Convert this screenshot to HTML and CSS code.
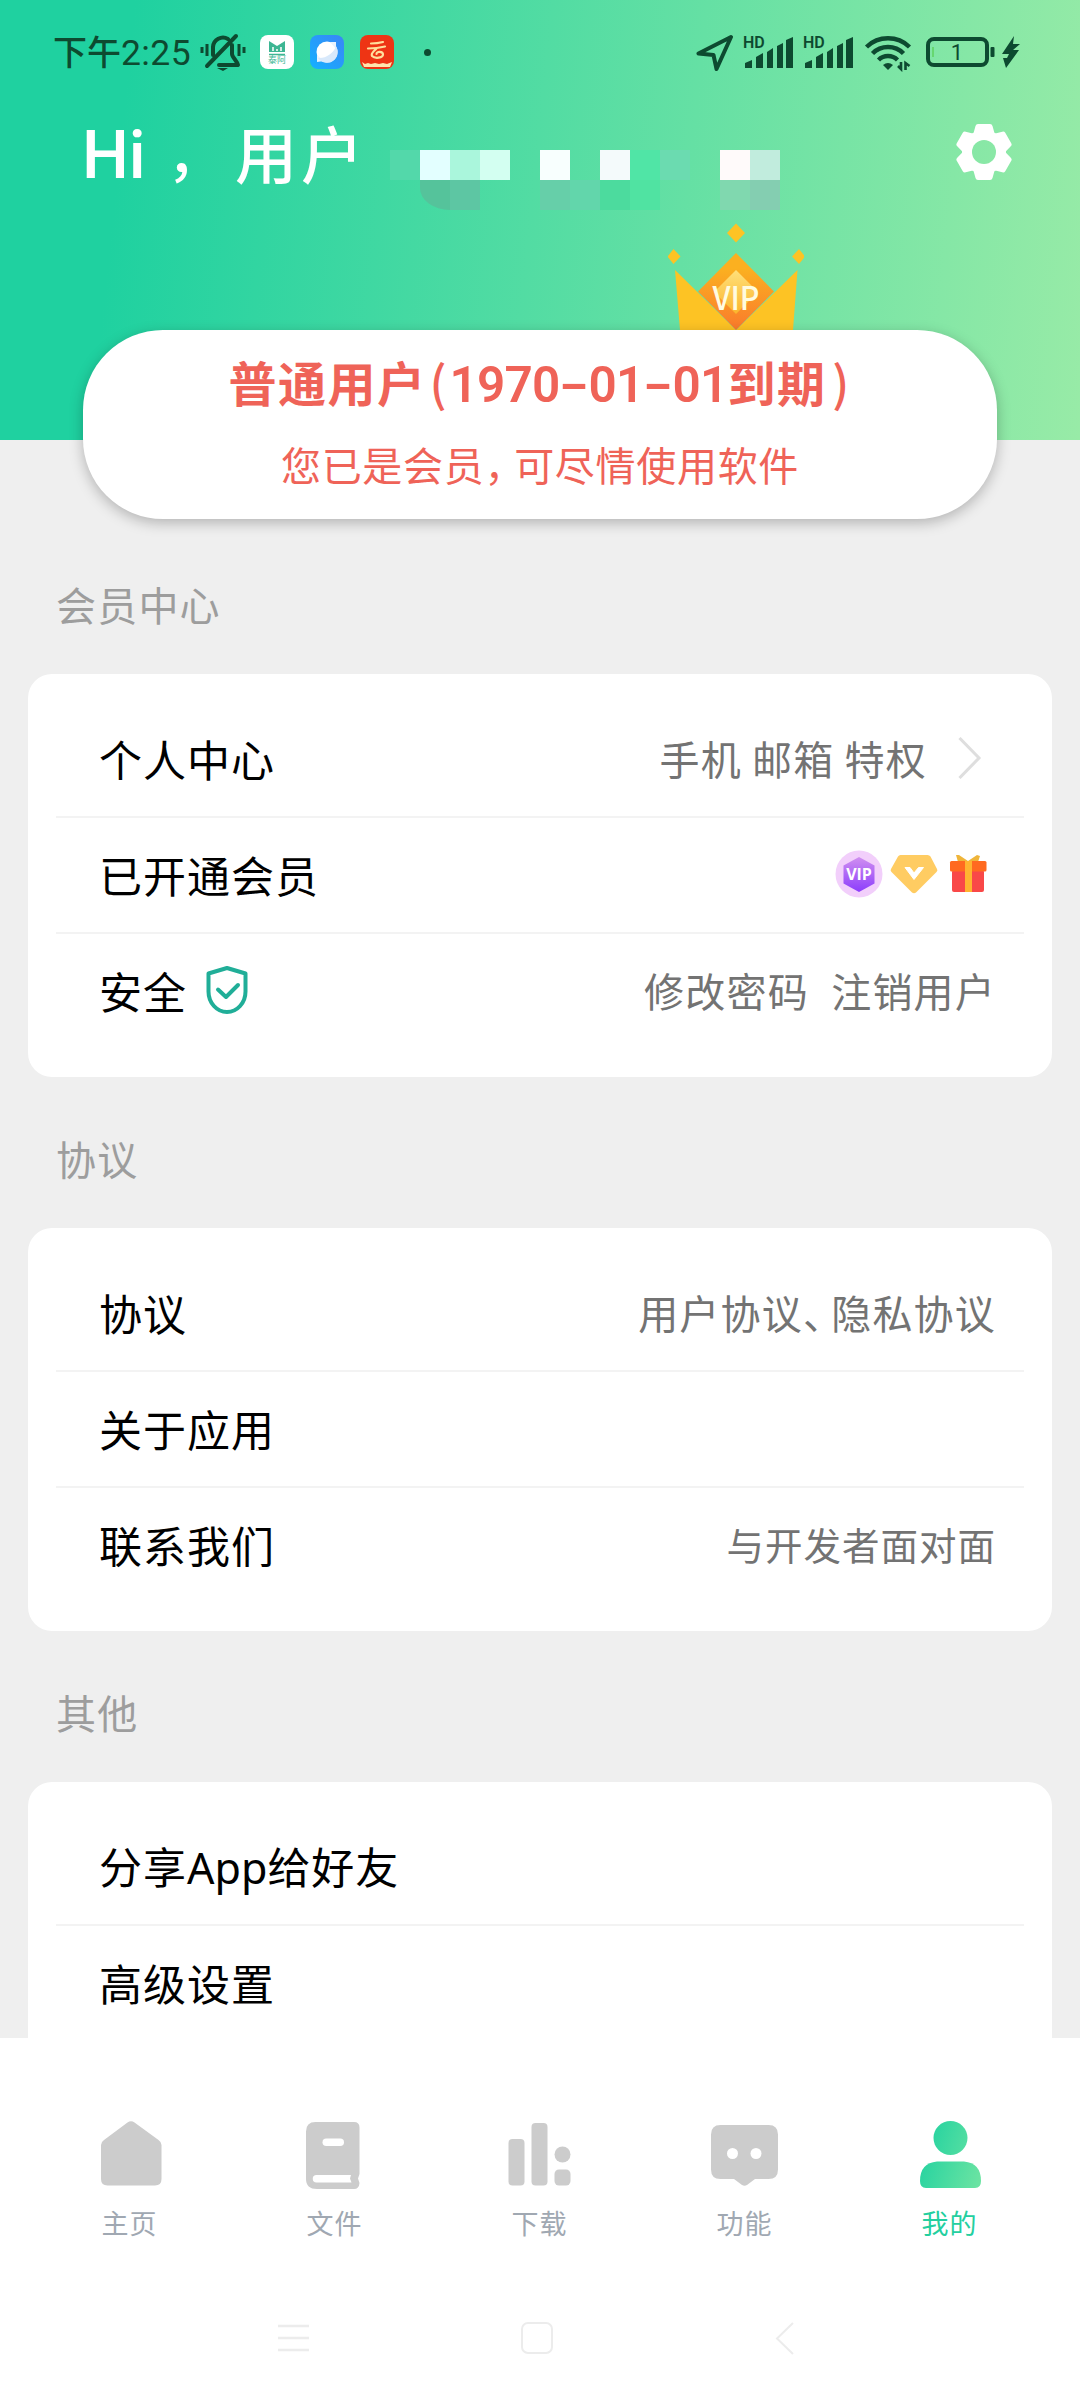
FILE: index.html
```html
<!DOCTYPE html>
<html lang="zh-CN">
<head>
<meta charset="utf-8">
<title>我的</title>
<link rel="stylesheet" href="styles.css">
</head>
<body>
<div class="screen">
  <main class="content">
    <header class="hero">
      <div class="status">
        <span class="clock">下午<span class="clock-num">2:25</span></span>
        <svg class="bell" width="46" height="40" viewBox="0 0 46 40" fill="none" stroke="currentColor" stroke-width="4" stroke-linecap="round" stroke-linejoin="round">
          <path d="M13 23V15a10 10 0 0 1 15-8M7 34L36 4M32 13v9c0 3 5 7 6 11H19"/>
          <path d="M2 15v6M7 12v12M39 12v12M44 15v6" stroke-width="3" stroke-linecap="butt"/>
          <path d="M17 36h11l-5 3z" fill="currentColor" stroke="none"/>
        </svg>
        <svg class="app" width="34" height="34" viewBox="0 0 34 34">
          <rect width="34" height="34" rx="8" fill="#fff"/>
          <path d="M9 6l8 5 8-5v11H9z" fill="#3db693"/><path d="M13 12v4M17 14v2M21 12v4" stroke="#fff" stroke-width="1.5"/><path d="M9 19.5h16" stroke="#3db693" stroke-width="1.5"/>
          <text x="17" y="28" text-anchor="middle" class="app-word">泰阿</text>
        </svg>
        <svg class="app" width="34" height="34" viewBox="0 0 34 34">
          <defs><linearGradient id="blue" x1="0" y1="1" x2="1" y2="0"><stop stop-color="#14b1ff"/><stop offset="1" stop-color="#3a86f6"/></linearGradient></defs>
          <rect width="34" height="34" rx="8" fill="url(#blue)"/>
          <circle cx="17" cy="17" r="10.5" fill="#fff"/><path d="M7 20l0 7 7-1M20 7l6 0 0 7" fill="#e9f3fd"/>
          <path d="M8 23C15 24 24 18 26 11a10.500 10.500 0 0 1-18 12z" fill="#d8e9fb"/>
        </svg>
        <svg class="app" width="34" height="34" viewBox="0 0 34 34">
          <rect width="34" height="34" rx="8" fill="#ee3414"/>
          <path d="M11 8.500q6 0 12-1.500M8 13.500q9 0 17-2M16.500 13.500c-3 3-6 5-4.500 7.500 3 3 11 2 11-1.500 0-3.500-6.500-3.500-6.500-.5" fill="none" stroke="#ffdf9d" stroke-width="2.200" stroke-linecap="round"/>
          <path d="M2 27l3 2 3-1 3 1 4-1 4 1 4-1 4 1 5-2-2 5H4z" fill="#ffe6ad"/>
        </svg>
        <span class="dot"></span>
        <svg class="locate" width="38" height="38" viewBox="0 0 38 38" fill="none" stroke="currentColor" stroke-width="4" stroke-linejoin="round"><path d="M35 3L2.500 19.500l15 1.500 3 14z"/></svg>
        <svg class="signal" width="52" height="36" viewBox="0 0 52 36" fill="currentColor"><text x="0" y="13.500" class="hd">HD</text><path d="M2 34v-5l7-3v8zM13 34V23l7-4v15zM24 34V18l6-4v20zM34 34V12l6-3v25zM43 34V6l7-3v31z"/></svg>
        <svg class="signal" width="52" height="36" viewBox="0 0 52 36" fill="currentColor"><text x="0" y="13.500" class="hd">HD</text><path d="M2 34v-5l7-3v8zM13 34V23l7-4v15zM24 34V18l6-4v20zM34 34V12l6-3v25zM43 34V6l7-3v31z"/></svg>
        <svg class="wifi" width="48" height="38" viewBox="0 0 48 38" fill="none" stroke="currentColor" stroke-width="4.500">
          <path d="M2.500 13a31 31 0 0 1 43 0M8.500 19.500a22 22 0 0 1 31 0M14.500 26a13.500 13.500 0 0 1 19 0"/>
          <path d="M24 36l-5-5a8 8 0 0 1 10 0z" fill="currentColor" stroke="none"/>
          <path d="M37 28v7l-3-3M41.500 36v-7l4 3" stroke-width="2.600"/>
        </svg>
        <svg class="battery" width="70" height="34" viewBox="0 0 70 34" fill="none" stroke="currentColor"><rect x="2" y="4" width="59" height="26" rx="6" stroke-width="4"/><rect x="64.500" y="12" width="4" height="10" rx="1" fill="currentColor" stroke="none"/><path d="M7 12v10" stroke="#4cc83b" stroke-width="1"/><text x="31" y="25" text-anchor="middle" class="level">1</text></svg>
        <svg class="bolt" width="18" height="32" viewBox="0 0 18 32" fill="currentColor"><path d="M12 0L0 18h7L5 22H1L4 32 17 14h-6l7-6h-7z"/></svg>
      </div>
      <div class="greeting">
        <div class="hello"><span class="hi">Hi</span><span class="comma">，</span><span class="user">用户</span></div>
        <div class="mosaic">
          <i class="m1"></i><i class="m2"></i><i class="m3"></i><i class="m4"></i><i></i><i class="m5"></i><i></i><i class="m6"></i><i class="m7"></i><i class="m8"></i><i></i><i class="m9"></i><i class="m10"></i>
          <i></i><i class="n1"></i><i class="n2"></i><i></i><i></i><i class="n3"></i><i class="n4"></i><i class="n5"></i><i class="n6"></i><i></i><i></i><i class="n7"></i><i class="n8"></i>
        </div>
        <svg class="gear" width="56" height="56" viewBox="-28 -28 56 56">
          <defs><mask id="hole"><rect x="-28" y="-28" width="56" height="56" fill="#fff"/><circle r="12" fill="#000"/></mask>
          <path id="tooth" d="M-11 -17L-8.500 -26Q-8 -28 -6 -28H6Q8 -28 8.500 -26L11 -17V0H-11z"/></defs>
          <g fill="#fff" mask="url(#hole)"><circle r="22"/><use href="#tooth"/><use href="#tooth" transform="rotate(60)"/><use href="#tooth" transform="rotate(120)"/><use href="#tooth" transform="rotate(180)"/><use href="#tooth" transform="rotate(240)"/><use href="#tooth" transform="rotate(300)"/></g>
        </svg>
      </div>
      <svg class="crown" width="136" height="108" viewBox="0 0 136 108">
        <defs>
          <linearGradient id="gem" x1="0" y1="0" x2="0" y2="1"><stop offset=".2" stop-color="#fbb020"/><stop offset="1" stop-color="#fa7a2c"/></linearGradient>
          <linearGradient id="core" x1="0" y1="0" x2="0" y2="1"><stop stop-color="#ffe07a"/><stop offset="1" stop-color="#fbb52c"/></linearGradient>
        </defs>
        <path d="M7 48L68 108 129.500 48 125 108H12z" fill="#fdc324"/>
        <path d="M68 31l38 38.500-38 38.500-38-38.500z" fill="url(#gem)"/>
        <path d="M68 48l22 22-22 22-22-22z" fill="url(#core)"/>
        <g fill="#fdc324"><path d="M68 1.500l9 9.500-9 9.500-9-9.500z"/><path d="M5.500 27l7 7.500-7 7.500-6-7.500zM131 27l6 7.500-6 7.500-7-7.500z"/></g>
        <text x="68" y="88" text-anchor="middle" class="crown-word" textLength="47" lengthAdjust="spacingAndGlyphs">VIP</text>
      </svg>
    </header>

    <section class="member">
      <h1 class="member-title">普通用户<span class="paren">(</span><span class="date">1970<span class="dash">-</span>01<span class="dash">-</span>01</span>到期<span class="paren close">)</span></h1>
      <p class="member-sub">您已是会员<span class="tight">，</span>可尽情使用软件</p>
    </section>

    <h2 class="label">会员中心</h2>
    <section class="card">
      <div class="row"><span class="name">个人中心</span><span class="value">手机 邮箱 特权</span>
        <svg class="arrow" width="24" height="42" viewBox="0 0 24 42" fill="none" stroke="#dedede" stroke-width="3"><path d="M1.500 1L21 21 1.500 41"/></svg></div>
      <div class="row"><span class="name">已开通会员</span>
        <span class="badges">
          <svg width="48" height="48" viewBox="0 0 48 48"><defs><linearGradient id="vip" x1="0" y1="0" x2="0" y2="1"><stop stop-color="#d08ff0"/><stop offset="1" stop-color="#8c3dfc"/></linearGradient></defs><circle cx="24" cy="24" r="23.500" fill="#f2cffb"/><path d="M24 7l15.500 8.500v18L24 42 8.500 33.500v-18z" fill="url(#vip)"/><text x="24" y="29.500" text-anchor="middle" class="vip-word">VIP</text></svg>
          <svg width="48" height="48" viewBox="0 0 48 48"><path d="M10.500 5h27q2 0 3 1.500L47 19q1 1.500-.5 3L26 42.500q-2 1.500-4 0L1.500 22q-1.500-1.500-.5-3L8 6.500Q8.800 5 10.500 5z" fill="#ffcc62"/><path d="M15 17.500h5l4 5.500 4.500-5.500h5L24 29.500z" fill="#fff" stroke="#fff" stroke-width="1"/></svg>
          <svg class="gift" width="38" height="48" viewBox="0 0 38 48"><path d="M7 5l3 0 9 6 9-6 3 1-2 6H9z" fill="#efb53a"/><rect x="3" y="20" width="32" height="22" rx="2" fill="#f94848"/><rect x="1" y="11" width="36.500" height="10.500" rx="1.500" fill="#ff6a20"/><rect x="16" y="11" width="7" height="31" fill="#ffb430"/></svg>
        </span></div>
      <div class="row"><span class="name">安全</span>
        <svg class="shield" width="44" height="50" viewBox="0 0 44 50" fill="none" stroke="#20ae98" stroke-width="4" stroke-linecap="round" stroke-linejoin="round"><path d="M22 3L40.500 8.500V26.500a18.500 20.500 0 0 1-37 0V8.500z"/><path d="M13 24.500l8 7.500 12-12"/></svg>
        <span class="value wide">修改密码  注销用户</span></div>
    </section>

    <h2 class="label">协议</h2>
    <section class="card">
      <div class="row"><span class="name">协议</span><span class="value">用户协议<span class="pause">、</span>隐私协议</span></div>
      <div class="row"><span class="name">关于应用</span></div>
      <div class="row"><span class="name">联系我们</span><span class="value small">与开发者面对面</span></div>
    </section>

    <h2 class="label">其他</h2>
    <section class="card">
      <div class="row"><span class="name">分享<span class="latin">App</span>给好友</span></div>
      <div class="row last"><span class="name">高级设置</span></div>
    </section>
  </main>

  <nav class="tabs">
    <div class="tab"><svg width="82" height="72" viewBox="0 0 82 72" fill="#ccc"><path d="M38.500 4.500q3.500-2.500 7 0L69.500 22q3 2 3 5v34q0 6.500-6.500 6.500H18.500Q12 67.500 12 61V27q0-3 3-5z"/></svg><span>主页</span></div>
    <div class="tab"><svg width="82" height="72" viewBox="0 0 82 72" fill="#ccc"><path d="M21.500 4H60q5.500 0 5.500 5.500V56l-1.500 4.500 1.500 4.500Q65 71 60 71H23Q12 71 12 61V13.500Q12 4 21.500 4z"/><rect x="28.500" y="20.500" width="21.500" height="7.500" rx="3.750" fill="#fff"/><path d="M22.500 57H57l-1 3.500 1.500 4H22.500a3.750 3.750 0 0 1 0-7.500z" fill="#fff"/></svg><span>文件</span></div>
    <div class="tab"><svg width="82" height="72" viewBox="0 0 82 72" fill="#ccc"><rect x="9.500" y="21" width="16" height="46.500" rx="4"/><rect x="32.500" y="5" width="16" height="62.500" rx="4"/><circle cx="63.500" cy="36.500" r="8"/><rect x="55.500" y="51.500" width="16" height="16" rx="4.500"/></svg><span>下载</span></div>
    <div class="tab"><svg width="82" height="72" viewBox="0 0 82 72" fill="#ccc"><path d="M16.500 7h48q9.500 0 9.500 9.500v35q0 9.500-9.500 9.500H51l-8 6q-2.500 1.500-5 0l-8-6H16.500Q7 61 7 51.500v-35Q7 7 16.500 7z"/><circle cx="28.500" cy="35.500" r="5.500" fill="#fff"/><circle cx="52" cy="35.500" r="5.500" fill="#fff"/></svg><span>功能</span></div>
    <div class="tab active"><svg width="82" height="72" viewBox="0 0 82 72"><defs><linearGradient id="me" gradientUnits="userSpaceOnUse" x1="10" y1="30" x2="74" y2="50"><stop stop-color="#22d2a0"/><stop offset="1" stop-color="#6ae3a2"/></linearGradient></defs><g fill="url(#me)"><circle cx="41.500" cy="20" r="17"/><path d="M28 43.500H55Q72 45 72 63q0 7-6 7H17q-6 0-6-7Q11 45 28 43.500z"/></g></svg><span>我的</span></div>
  </nav>
  <footer class="system">
    <svg width="34" height="34" viewBox="0 0 34 34" stroke="#ececec" stroke-width="2.500"><path d="M1 5h31M1 17h31M1 29h31"/></svg>
    <svg width="34" height="34" viewBox="0 0 34 34" fill="none" stroke="#ececec" stroke-width="2"><rect x="2" y="2" width="30" height="30" rx="6"/></svg>
    <svg width="20" height="34" viewBox="0 0 20 34" fill="none" stroke="#ececec" stroke-width="2"><path d="M18 2L2 17.500 18 33"/></svg>
  </footer>
</div>
</body>
</html>
```
FILE: styles.css
```css
* { box-sizing: border-box; margin: 0; padding: 0; }
body {
  width: 1080px;
  height: 2400px;
  overflow: hidden;
  background: #fff;
  font-family: "Noto Sans CJK SC", sans-serif;
}
svg { display: block; flex: none; }
.screen { width: 1080px; height: 2400px; display: flex; flex-direction: column; }
.content { height: 2038px; flex: none; overflow: hidden; background: #efefef; display: flex; flex-direction: column; }
.content > * { flex: none; }

/* header */
.hero { height: 440px; background: linear-gradient(96deg, #1fd1a0 12%, #98eba7 100%); }
.status { height: 104px; padding-left: 53px; display: flex; align-items: center; color: #0d4a30; }
.clock { width: 147px; font-size: 34px; line-height: 48px; font-weight: 500; white-space: nowrap; }
.clock-num { font-family: Roboto, sans-serif; font-size: 35.500px; font-weight: 400; letter-spacing: .4px; }
.bell { margin-right: 14px; }
.app { margin-right: 16px; }
.app-word { font-size: 9px; fill: #3db693; }
.dot { width: 7px; height: 7px; margin-left: 14px; border-radius: 50%; background: currentColor; flex: none; }
.locate { margin-left: 265px; margin-top: 2px; }
.signal { margin-left: 8px; }
.locate + .signal { margin-left: 9px; }
.hd { font: 600 16px Roboto, sans-serif; }
.wifi { margin-left: 9px; margin-top: 2px; }
.battery { margin-left: 14px; }
.level { font: 400 22px Roboto, sans-serif; fill: #0d4a30; stroke: none; }
.bolt { margin-left: 6px; }

.greeting { height: 120px; display: flex; align-items: flex-start; }
.hello { width: 306px; margin-left: 82px; font-size: 62px; line-height: 96px; font-weight: 500; color: #fff; display: flex; white-space: nowrap; }
.hi { width: 82px; padding-top: 4px; font-family: Roboto, sans-serif; font-size: 66px; }
.comma { width: 68px; margin-left: 3px; font-size: 56px; }
.user { letter-spacing: 4px; }
.mosaic { width: 390px; height: 60px; margin: 46px 0 0 2px; display: grid; grid-template-columns: repeat(13, 30px); grid-auto-rows: 30px; }
.m1 { background: #53d8aa; } .m2 { background: #e3ffff; } .m3 { background: #aaf6dc; } .m4 { background: #d3fff1; }
.m5 { background: #f8fffe; } .m6 { background: #f4fafb; } .m7 { background: #50e5a6; } .m8 { background: #6bdbb0; }
.m9 { background: #fffafa; } .m10 { background: #c1ecdd; }
.n1 { background: #55c39b; border-bottom-left-radius: 30px 22px; } .n2 { background: #5dc6a3; }
.n3 { background: #66cfa9; } .n4 { background: #62d6ab; } .n5 { background: #4cdb9e; } .n6 { background: #50e3a2; }
.n7 { background: #80d8af; } .n8 { background: #84ceb1; }
.gear { margin: 20px 0 0 176px; }
.crown { margin: -2px 0 0 668px; }
.crown-word { font: 500 32px "Noto Sans CJK SC", sans-serif; fill: #fffbe0; }

/* membership banner */
.member {
  position: relative;
  width: 914px;
  height: 189px;
  margin: -110px 0 0 83px;
  padding-top: 14px;
  border-radius: 80px;
  background: #fff;
  box-shadow: 0 4px 14px rgba(0, 0, 0, .25);
  color: #ef6358;
  text-align: center;
  white-space: nowrap;
}
.member-title { padding-right: 2px; font-size: 48px; letter-spacing: 1.500px; line-height: 74px; font-weight: 700; }
.paren { display: inline-block; width: 23px; letter-spacing: 0; text-align: center; font-weight: 500; }
.close { text-align: right; }
.date { font-family: Roboto, sans-serif; font-size: 49.500px; letter-spacing: -.8px; font-weight: 600; }
.dash { display: inline-block; width: 29px; text-align: center; transform: scaleX(1.7); }
.member-sub { margin-top: 12px; font-size: 40px; letter-spacing: .7px; line-height: 60px; }
.tight { margin-right: 9px; font-feature-settings: "halt"; }

/* lists */
.label { height: 151px; padding: 51px 0 0 56px; font-size: 40px; letter-spacing: 1.200px; line-height: 60px; font-weight: 400; color: #9d9d9d; }
.member + .label { height: 155px; padding-top: 55px; }
.card { width: 1024px; height: 403px; margin-left: 28px; padding: 28px 28px 0; border-radius: 24px; background: #fff; }
.row { height: 116px; padding: 0 28px 2px 43px; border-bottom: 2px solid #f3f3f3; display: flex; align-items: center; }
.row:last-child { border-bottom: 0; padding-bottom: 4px; }
.name { font-size: 43px; letter-spacing: 1px; line-height: 64px; color: #000; }
.latin { font-family: "Noto Sans", sans-serif; letter-spacing: 0; }
.value { margin-left: auto; font-size: 40px; letter-spacing: 1.200px; line-height: 60px; color: #737373; white-space: pre; }
.wide { word-spacing: 1px; }
.small { font-size: 37.500px; letter-spacing: 1px; }
.pause { margin-right: 7px; font-feature-settings: "halt"; }
.arrow { margin: 0 14px 0 31px; }
.badges { margin-left: auto; display: flex; gap: 7px; margin-right: 9px; }
.gift { margin-left: 4px; }
.shield { margin-left: 18px; }
.vip-word { font: 700 16px "Open Sans", sans-serif; fill: #fff; }

/* bottom bar */
.tabs { height: 230px; flex: none; padding: 80px 28px 0 27px; display: flex; }
.tab { flex: 1; display: flex; flex-direction: column; align-items: center; font-size: 27px; letter-spacing: 1px; line-height: 40px; color: #a0a8b2; }
.tab span { margin-top: 13px; }
.tab.active { color: #24cf9f; }
.system { height: 132px; flex: none; padding: 53px 0 0 277px; display: flex; }
.system svg + svg { margin-left: 209px; }
.system svg + svg + svg { margin-left: 221px; }
```
